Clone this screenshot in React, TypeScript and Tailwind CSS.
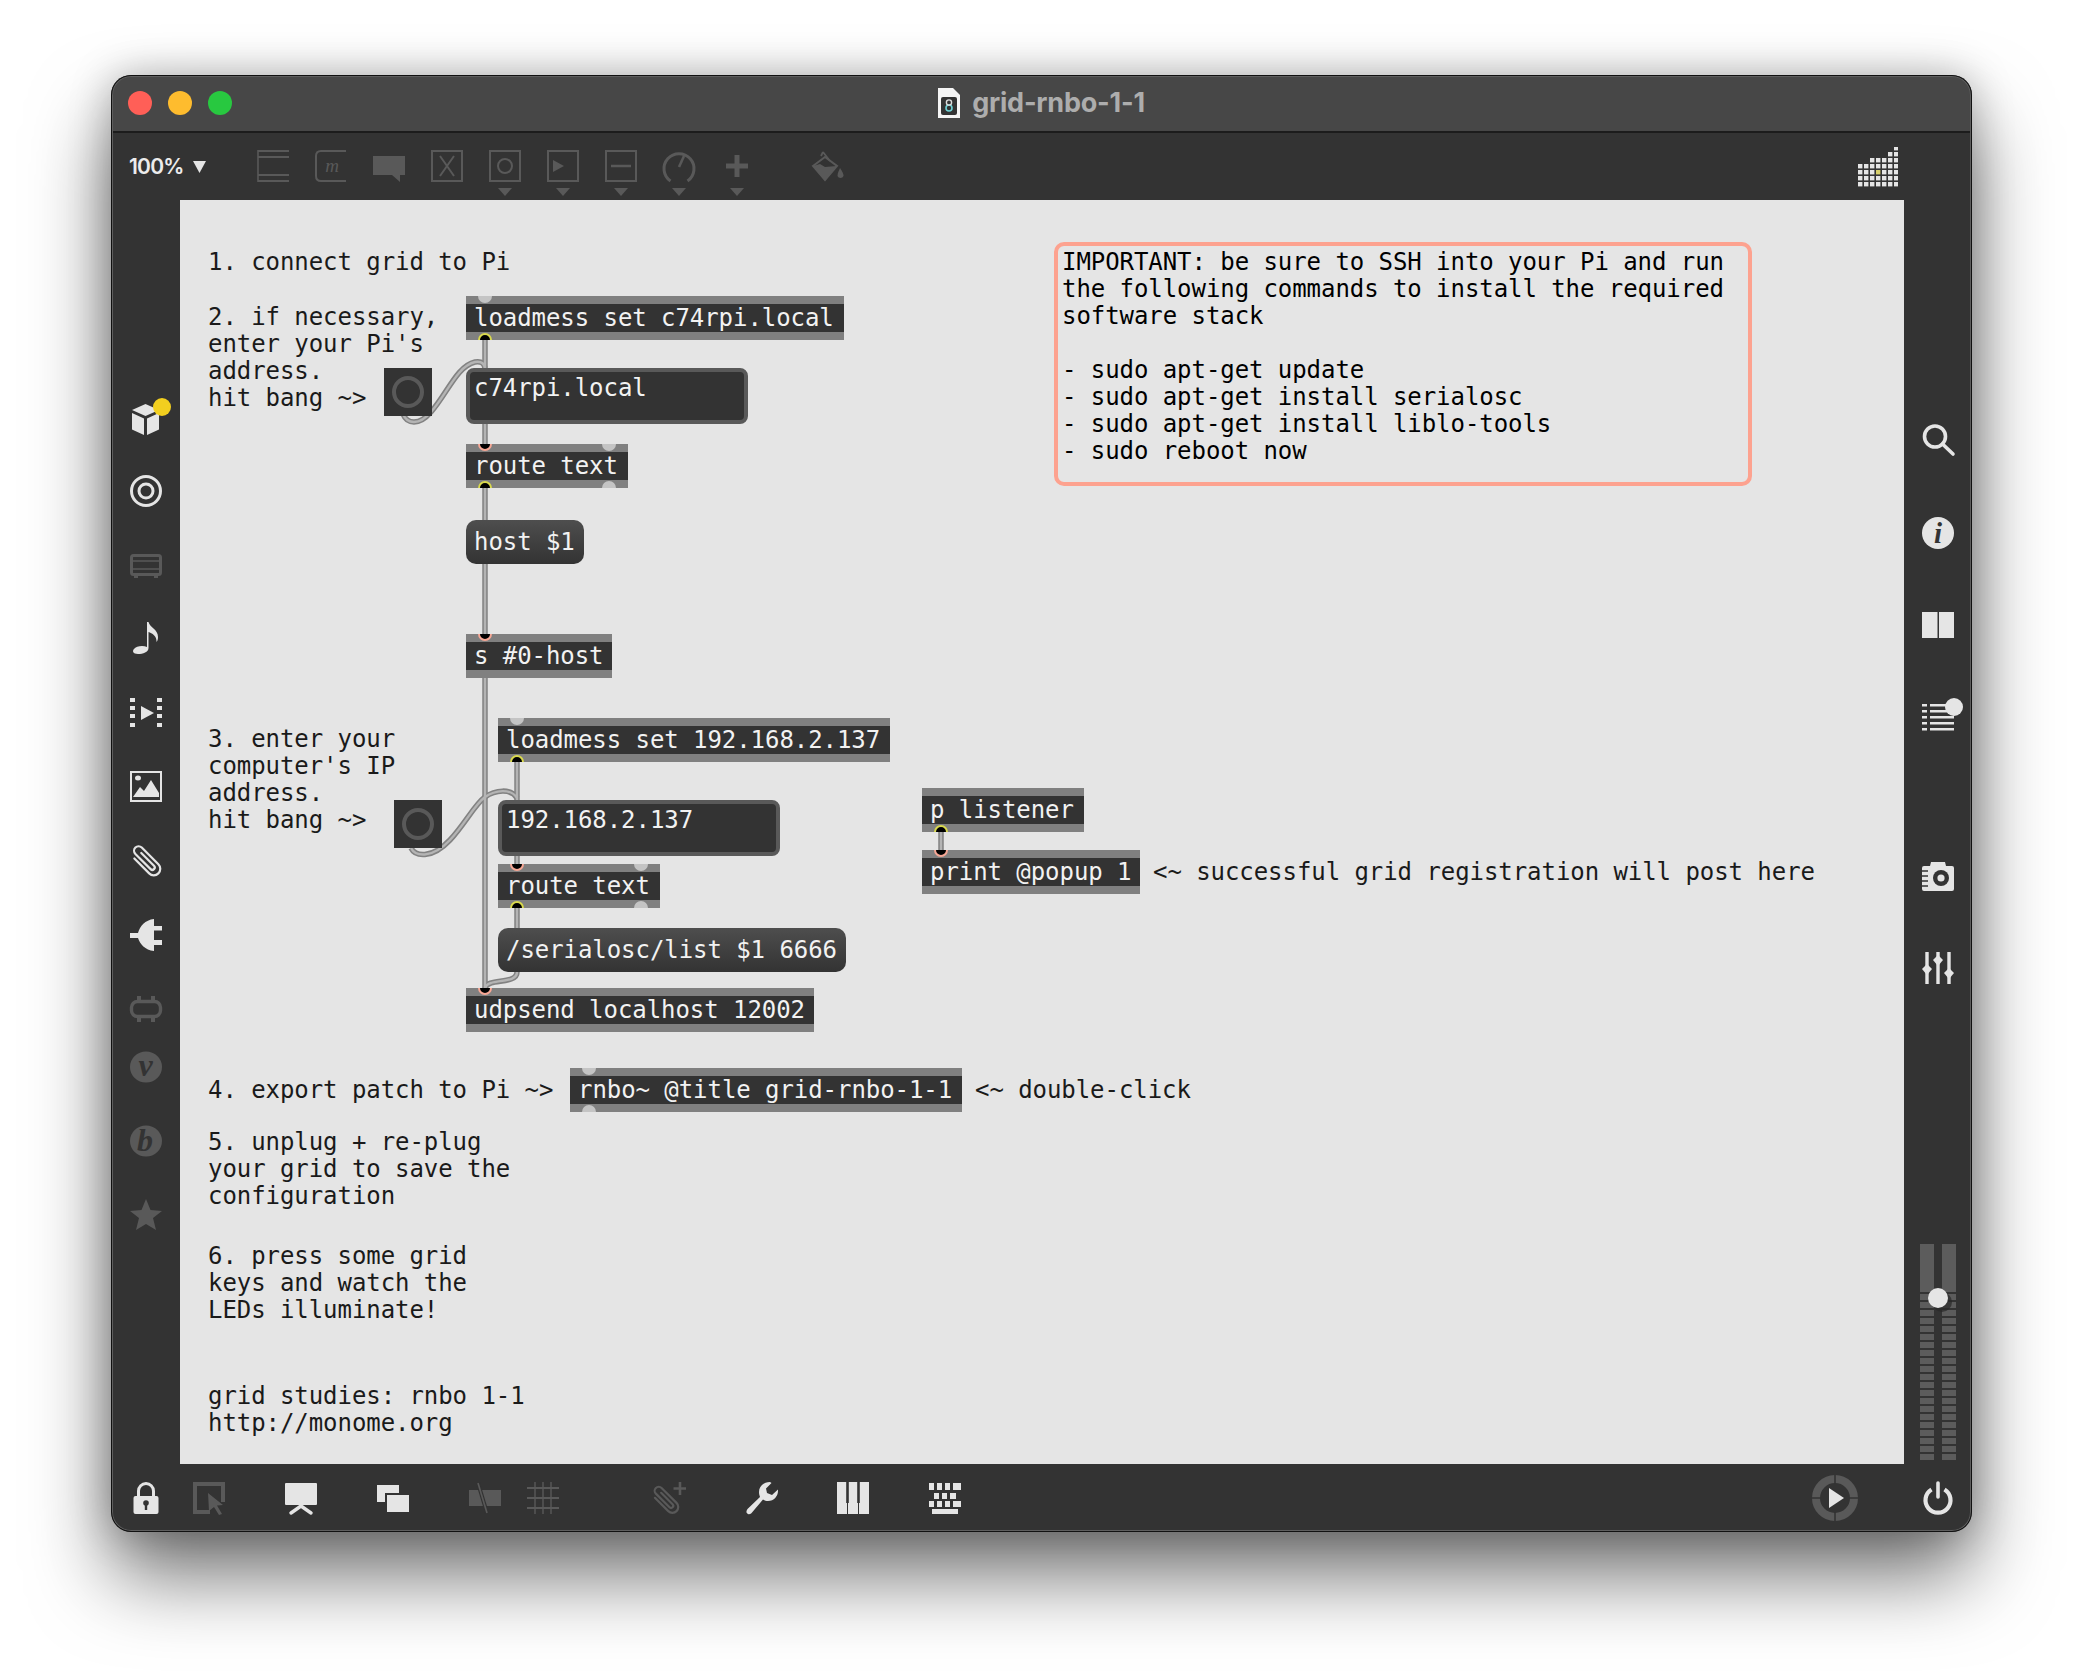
import React from "react";

const L = "#e5e5e5";
const D = "#595959";
const B = "#333333";

const Svg = ({ children, size = 32, className = "" }: { children: React.ReactNode; size?: number; className?: string }) => (
  <svg width={size} height={size} viewBox={`0 0 ${size} ${size}`} className={`block shrink-0 overflow-visible ${className}`}>
    {children}
  </svg>
);

const Clip = ({ c, sw = 2.2 }: { c: string; sw?: number }) => (
  <path
    transform="rotate(-45 16 16)"
    d="M9.5 6 V27 a6.5 6.5 0 0 0 13 0 V3.5 a4.5 4.5 0 0 0 -9 0 V25 a2.4 2.4 0 0 0 4.8 0 V7"
    fill="none"
    stroke={c}
    strokeWidth={sw}
    strokeLinecap="round"
  />
);

const Caret = () => (
  <svg width="14" height="8" viewBox="0 0 14 8" className="mt-[6px] block">
    <polygon points="0,0 14,0 7,8" fill={D} />
  </svg>
);

const BoxIcon = ({ children }: { children: React.ReactNode }) => (
  <Svg>
    <rect x="1" y="1" width="30" height="30" fill="none" stroke={D} strokeWidth="2" />
    {children}
  </Svg>
);

const Toolbar = () => (
  <div className="flex h-[67px] items-start pl-[18px] pt-[17px]">
    <div className="flex h-[32px] w-[128px] items-center gap-[10px] pt-[2px] font-['Inter',sans-serif] text-[21px] font-semibold tracking-[-0.8px] text-[#ececec]">
      <span>100%</span>
      <svg width="13" height="12" viewBox="0 0 13 12" className="block"><polygon points="0,0 13,0 6.5,12" fill={L} /></svg>
    </div>
    <div className="flex gap-[26px]">
      <Svg>
        <path d="M1 0V32" stroke={D} strokeWidth="1.6" />
        <path d="M1 1H32M1 7H32M1 25H32M1 31H32" stroke={D} strokeWidth="2.2" fill="none" />
      </Svg>
      <Svg>
        <path d="M31 1H6Q1 1 1 6V26Q1 31 6 31H31" fill="none" stroke={D} strokeWidth="2" />
        <text x="17" y="22" textAnchor="middle" fill={D} fontFamily="'Liberation Serif',serif" fontStyle="italic" fontSize="19">m</text>
      </Svg>
      <Svg><polygon points="0,6 32,6 32,25 27,25 27,32 19,25 0,25" fill={D} /></Svg>
      <BoxIcon><path d="M9 6L23 26M23 6L9 26" stroke={D} strokeWidth="2" /></BoxIcon>
      <div className="flex flex-col items-center">
        <BoxIcon><circle cx="16" cy="16" r="7" fill="none" stroke={D} strokeWidth="2" /></BoxIcon>
        <Caret />
      </div>
      <div className="flex flex-col items-center">
        <BoxIcon><polygon points="6,10 17,16 6,22" fill={D} /></BoxIcon>
        <Caret />
      </div>
      <div className="flex flex-col items-center">
        <BoxIcon><path d="M6 16H26" stroke={D} strokeWidth="2.4" /></BoxIcon>
        <Caret />
      </div>
      <div className="flex flex-col items-center">
        <Svg>
          <path d="M7.5 31A15 15 0 1 1 24.5 31" fill="none" stroke={D} strokeWidth="3" />
          <path d="M16 17L21 6" stroke={D} strokeWidth="2.6" />
        </Svg>
        <Caret />
      </div>
      <div className="flex flex-col items-center">
        <Svg><path d="M16 5V27M5 16H27" stroke={D} strokeWidth="5" /></Svg>
        <Caret />
      </div>
    </div>
    <div className="ml-[59px]">
      <Svg>
        <path d="M11 2L18 11M11 2L9 6" stroke={D} strokeWidth="1.8" fill="none" />
        <polygon points="1,16 13,7 25,16 13,30" fill="none" stroke={D} strokeWidth="2" />
        <polygon points="1,16 8,14 13,17 25,16 13,31" fill={D} />
        <path d="M28 18Q32 24 31.5 26A3.2 3.2 0 0 1 25.5 26Q25.5 23 28 18Z" fill={D} />
      </Svg>
    </div>
    <svg width="40" height="40" viewBox="0 0 40 40" className="-mt-[3px] ml-auto mr-[74px] block">
      {[4, 4, 5, 5, 5, 6, 7].map((h, i) =>
        Array.from({ length: h }).map((_, r) => (
          <rect key={`${i}-${r}`} x={i * 6} y={35 - r * 6} width="4.4" height="4.4" fill={i === 3 && r === 2 ? "#d7cf6a" : L} />
        ))
      )}
    </svg>
  </div>
);

const LeftBar = () => (
  <div className="flex w-[69px] shrink-0 flex-col items-center pl-[1px] pt-[203px]">
    <Svg>
      <polygon points="15.5,1 29,7 15.5,13 2,7" fill={L} />
      <polygon points="2,10 14,15.5 14,32 2,26.5" fill={L} />
      <polygon points="17,15.5 29,10 29,26.5 17,32" fill={L} />
      <circle cx="32" cy="4" r="9" fill="#f2cf1f" />
    </Svg>
    <div className="mt-[40px]">
      <Svg>
        <circle cx="16" cy="16" r="14.5" fill="none" stroke={L} strokeWidth="3" />
        <circle cx="16" cy="16" r="7" fill="none" stroke={L} strokeWidth="3" />
      </Svg>
    </div>
    <div className="mt-[42px]">
      <Svg>
        <rect x="1.5" y="6.5" width="29" height="19" rx="2" fill="none" stroke={D} strokeWidth="3" />
        <path d="M2 12H30M2 20H30" stroke={D} strokeWidth="1.5" />
        <path d="M6 26V29M26 26V29" stroke={D} strokeWidth="4" />
      </Svg>
    </div>
    <div className="mt-[41px]">
      <Svg>
        <path d="M17 0H18.5C20 6 28 7 28 15C28 17 27.5 19 26.5 20C27 14 22 11 18.5 10V26C18.5 30 13 32 8 32C3 32 2 29 4 27C6 24 13 23 17 25Z" fill={L} />
      </Svg>
    </div>
    <div className="mt-[43px]">
      <Svg>
        <path d="M0 1H5V5H0ZM0 9H5V13H0ZM0 17H5V21H0ZM0 26H5V30H0ZM27 1H32V5H27ZM27 9H32V13H27ZM27 17H32V21H27ZM27 26H32V30H27Z" fill={L} />
        <polygon points="11,9 24,16 11,23" fill={L} />
      </Svg>
    </div>
    <div className="mt-[42px]">
      <Svg>
        <rect x="1" y="1" width="30" height="29" fill="none" stroke={L} strokeWidth="2" />
        <ellipse cx="8" cy="7" rx="3" ry="2.5" fill={L} />
        <path d="M3 26L10 16L14 20L21 9L29 22V26Z" fill={L} />
      </Svg>
    </div>
    <div className="mt-[42px]">
      <Svg><Clip c={L} /></Svg>
    </div>
    <div className="mt-[42px]">
      <Svg>
        <path d="M0 14H8C10 7 15 1 24 0V32C15 31 10 25 8 19H0Z" fill={L} />
        <path d="M24 7H32V11.5H24ZM24 21H32V26H24Z" fill={L} />
      </Svg>
    </div>
    <div className="mt-[42px]">
      <Svg>
        <rect x="1.5" y="8.5" width="29" height="15" rx="6" fill="none" stroke={D} strokeWidth="3.4" />
        <path d="M9 3V29M23 3V29" stroke={D} strokeWidth="4" strokeDasharray="6 14" />
      </Svg>
    </div>
    <div className="mt-[26px]">
      <Svg>
        <ellipse cx="16" cy="16" rx="16" ry="15.5" fill={D} />
        <text x="15.5" y="25" textAnchor="middle" fill={B} fontFamily="'Liberation Serif',serif" fontStyle="italic" fontWeight="700" fontSize="32">v</text>
      </Svg>
    </div>
    <div className="mt-[42px]">
      <Svg>
        <ellipse cx="16" cy="16" rx="16" ry="15.5" fill={D} />
        <text x="15" y="26" textAnchor="middle" fill={B} fontFamily="'Liberation Serif',serif" fontStyle="italic" fontWeight="700" fontSize="32">b</text>
      </Svg>
    </div>
    <div className="mt-[42px]">
      <Svg><polygon points="16,0 20.5,11 32,12 23,19 26,31 16,25 6,31 9,19 0,12 11.5,11" fill={D} /></Svg>
    </div>
  </div>
);

const RightBar = () => (
  <div className="flex w-[68px] shrink-0 flex-col items-center pt-[225px]">
    <Svg>
      <circle cx="13" cy="11.5" r="10.5" fill="none" stroke={L} strokeWidth="3.6" />
      <path d="M20.5 19L31 29" stroke={L} strokeWidth="3.6" strokeLinecap="round" />
    </Svg>
    <div className="mt-[60px]">
      <Svg>
        <circle cx="16" cy="16" r="16" fill={L} />
        <text x="16" y="26" textAnchor="middle" fill={B} fontFamily="'Liberation Serif',serif" fontStyle="italic" fontWeight="700" fontSize="29">i</text>
      </Svg>
    </div>
    <div className="mt-[60px]">
      <Svg>
        <rect x="0" y="3" width="15.5" height="26" fill={L} />
        <rect x="17" y="3" width="15" height="26" fill={L} />
      </Svg>
    </div>
    <div className="mt-[59px]">
      <Svg>
        <path d="M0 4H5V6.4H0ZM8 4H26V6.4H8ZM0 10H5V12.4H0ZM8 10H26V12.4H8ZM0 16H5V18.4H0ZM8 16H32V18.4H8ZM0 22H5V24.4H0ZM8 22H32V24.4H8ZM0 28H5V30.4H0ZM8 28H32V30.4H8Z" fill={L} />
        <circle cx="32" cy="7" r="9" fill={L} />
      </Svg>
    </div>
    <div className="mt-[128px]">
      <Svg>
        <path d="M2 6H8L9 2H23L24 6H30Q32 6 32 8V29Q32 31 30 31H2Q0 31 0 29V8Q0 6 2 6Z" fill={L} />
        <path d="M0 11H6M0 16H6M0 21H6M0 26H6" stroke={B} strokeWidth="1.6" />
        <circle cx="19" cy="18" r="8" fill={B} />
        <circle cx="19" cy="18" r="3.6" fill={L} />
      </Svg>
    </div>
    <div className="mt-[60px]">
      <Svg>
        <path d="M5 0V32M16 0V32M27 0V32" stroke={L} strokeWidth="3.4" />
        <polygon points="0,17 5,12 10,17 5,23" fill={L} />
        <polygon points="11,8 16,3 21,8 16,14" fill={L} />
        <polygon points="22,21 27,16 32,21 27,27" fill={L} />
      </Svg>
    </div>
    <div className="relative mb-[4px] mt-auto flex gap-[8px]">
      {[0, 1].map((k) => (
        <div key={k} className="flex w-[14px] flex-col gap-[2px]">
          <div className="h-[48px] bg-[#5c5c5c]" />
          {Array.from({ length: 21 }).map((_, i) => (
            <div key={i} className="h-[6px] bg-[#5c5c5c]" />
          ))}
        </div>
      ))}
      <div className="absolute left-[8px] top-[44px] h-[20px] w-[20px] rounded-full bg-[#e5e5e5] shadow-[4px_4px_0_rgba(40,40,40,0.7)]" />
    </div>
  </div>
);

const BottomBar = () => (
  <div className="flex h-[68px] items-center pl-[19px] pr-[18px]">
    <Svg>
      <path d="M8.5 15V9A7.5 7.5 0 0 1 23.5 9V15" fill="none" stroke={L} strokeWidth="3" />
      <rect x="3.5" y="14" width="25" height="18" rx="2" fill={L} />
      <circle cx="16" cy="21" r="2.8" fill={B} />
      <rect x="14.8" y="22" width="2.4" height="6" fill={B} />
    </Svg>
    <div className="ml-[31px]">
      <Svg>
        <path d="M30 20V2H2V30H17" fill="none" stroke={D} strokeWidth="4" />
        <polygon points="15,11 30,23 24,23.5 29,32 26,33 21,25 16,29" fill={D} />
      </Svg>
    </div>
    <div className="ml-[60px]">
      <Svg>
        <rect x="0" y="1" width="32" height="22" rx="1" fill={L} />
        <path d="M16 24L6 31M16 24L26 31" stroke={L} strokeWidth="3.4" strokeLinecap="round" />
      </Svg>
    </div>
    <div className="ml-[60px]">
      <Svg>
        <path d="M0 3H22V11H8V20H0Z" fill={L} />
        <rect x="10" y="13" width="22" height="17" fill={L} />
      </Svg>
    </div>
    <div className="ml-[60px]">
      <Svg>
        <rect x="0" y="8" width="32" height="16" fill={D} />
        <path d="M9 1L18 31" stroke={B} strokeWidth="4" />
        <path d="M9 1L18 31" stroke={D} strokeWidth="1.6" />
      </Svg>
    </div>
    <div className="ml-[26px]">
      <Svg>
        <path d="M8 0V32M16 0V32M24 0V32" stroke={D} strokeWidth="1.4" />
        <path d="M0 6H32M0 16H32M0 26H32" stroke={D} strokeWidth="1.8" />
      </Svg>
    </div>
    <div className="ml-[95px]">
      <Svg>
        <g transform="translate(-3 3.6) scale(0.9)"><Clip c={D} sw={2.4} /></g>
        <path d="M26 0V13M19.5 6.5H32" stroke={D} strokeWidth="2.6" />
      </Svg>
    </div>
    <div className="ml-[60px]">
      <Svg>
        <path
          d="M24 0C18 0 13 4 13 10C13 12 13.5 13.5 14 15L1.5 27C0 29 0 31 2 32C3.5 32.5 5 32 6 30.5L17 17.5C19 18.5 20 19 22 19C28 19 32 14 32 9L32 7.5L26 13L21 11L20 6.5L25.5 1Z"
          fill={L}
        />
      </Svg>
    </div>
    <div className="ml-[59px]">
      <Svg>
        <rect x="0" y="0" width="32" height="32" fill={L} />
        <rect x="9.2" y="0" width="2.6" height="21" fill={B} />
        <rect x="20.2" y="0" width="2.6" height="21" fill={B} />
        <path d="M10.5 21V32M21.5 21V32" stroke={B} strokeWidth="1" />
      </Svg>
    </div>
    <div className="ml-[60px]">
      <Svg>
        <path
          d="M0 1H5V8H0ZM8 1H13V8H8ZM16 1H21V8H16ZM24 1H32V8H24ZM5 11H10V17H5ZM13 11H18V17H13ZM21 11H27V17H21ZM0 19H5V25H0ZM8 19H13V25H8ZM16 19H21V25H16ZM24 19H32V25H24ZM3 27H29V32H3Z"
          fill={L}
        />
      </Svg>
    </div>
    <div className="ml-auto mr-[64px]">
      <Svg size={46}>
        <circle cx="23" cy="23" r="19" fill="none" stroke={D} strokeWidth="8" />
        <path d="M23 0V9M23 37V46M0 23H9M37 23H46" stroke={B} strokeWidth="1.6" />
        <polygon points="17,13 32,23 17,33" fill={L} />
      </Svg>
    </div>
    <Svg>
      <path d="M9.5 7.5A12.5 12.5 0 1 0 22.5 7.5" fill="none" stroke={L} strokeWidth="4.2" />
      <path d="M16 1V15" stroke={L} strokeWidth="3.6" strokeLinecap="round" />
    </Svg>
  </div>
);

const Port = ({ at, kind }: { at: "tl" | "tr" | "bl" | "br"; kind: "in" | "out" | "off" }) => {
  const place = {
    tl: "-top-[7px] left-[12px]",
    tr: "-top-[7px] right-[12px]",
    bl: "-bottom-[7px] left-[12px]",
    br: "-bottom-[7px] right-[12px]",
  }[at];
  const look = {
    in: "bg-black border-2 border-[#f7a795]",
    out: "bg-black border-2 border-[#d9d94d]",
    off: "bg-[#c4c4c4]",
  }[kind];
  return <span className={`absolute block h-[14px] w-[14px] rounded-full ${place} ${look}`} />;
};

const Obj = ({ className, text, children }: { className: string; text: string; children?: React.ReactNode }) => (
  <div className={`absolute h-[44px] overflow-hidden bg-[#808080] py-[8px] ${className}`}>
    <div className="h-[28px] whitespace-pre bg-[#333333] pl-[8px] leading-[29px] text-[#f2f2f2]">{text}</div>
    {children}
  </div>
);

const Msg = ({ className, text }: { className: string; text: string }) => (
  <div className={`absolute flex h-[44px] items-center whitespace-pre rounded-[10px] bg-linear-to-b from-[#4e4e4e] to-[#333333] pl-[8px] text-[#f2f2f2] ${className}`}>{text}</div>
);

const TextBox = ({ className, text }: { className: string; text: string }) => (
  <div className={`absolute h-[56px] whitespace-pre rounded-[8px] border-[4px] border-[#595959] bg-[#333333] pl-[4px] pt-[3px] leading-[27px] text-[#f2f2f2] ${className}`}>{text}</div>
);

const Bang = ({ className }: { className: string }) => (
  <div className={`absolute flex h-[48px] w-[48px] items-center justify-center bg-[#333333] ${className}`}>
    <div className="h-[32px] w-[32px] rounded-full border-[4px] border-[#595959]" />
  </div>
);

const Note = ({ className, text }: { className: string; text: string }) => (
  <div className={`absolute whitespace-pre leading-[27px] text-[#1a1a1a] ${className}`}>{text}</div>
);

const cords = [
  "M306 140V168",
  "M224 214C228 224 240 226 252 212C268 194 278 166 296 162C302 161 305 163 306 168",
  "M306 224V244",
  "M306 288V320",
  "M306 364V434",
  "M306 478V790",
  "M338 562V600",
  "M232 648C236 656 252 660 271 640C286 624 296 604 306 597C316 590 332 588 338 598",
  "M338 656V664",
  "M338 708V728",
  "M338 772C338 782 320 780 312 783C308 784 306 786 306 790",
  "M762 632V650",
];

const Canvas = () => (
  <div className="min-w-0 flex-1 overflow-hidden bg-[#e5e5e5] font-['DejaVu_Sans_Mono',monospace] text-[24px] leading-[28px] tracking-[-0.06px]">
    <div className="relative -ml-[1px] h-full">
      <svg className="absolute left-0 top-0 block" width="1725" height="1264">
        {cords.map((d) => (
          <path key={d} d={d} fill="none" stroke="#828282" strokeWidth="5.5" />
        ))}
        {cords.map((d) => (
          <path key={d + "i"} d={d} fill="none" stroke="#b4b4b4" strokeWidth="2.4" />
        ))}
      </svg>

      <Note className="left-[29px] top-[49px]" text="1. connect grid to Pi" />
      <Note className="left-[29px] top-[104px]" text={"2. if necessary,\nenter your Pi's\naddress.\nhit bang ~>"} />
      <Note className="left-[29px] top-[526px]" text={"3. enter your\ncomputer's IP\naddress.\nhit bang ~>"} />
      <Note className="left-[29px] top-[877px]" text="4. export patch to Pi ~>" />
      <Note className="left-[796px] top-[877px]" text="<~ double-click" />
      <Note className="left-[29px] top-[929px]" text={"5. unplug + re-plug\nyour grid to save the\nconfiguration"} />
      <Note className="left-[29px] top-[1043px]" text={"6. press some grid\nkeys and watch the\nLEDs illuminate!"} />
      <Note className="left-[29px] top-[1183px]" text={"grid studies: rnbo 1-1\nhttp://monome.org"} />
      <Note className="left-[974px] top-[659px]" text="<~ successful grid registration will post here" />

      <div className="absolute left-[875px] top-[42px] h-[244px] w-[698px] whitespace-pre rounded-[10px] border-[4px] border-[#fda28f] pl-[4px] pt-[3px] leading-[27px] text-black">
        {"IMPORTANT: be sure to SSH into your Pi and run\nthe following commands to install the required\nsoftware stack\n\n- sudo apt-get update\n- sudo apt-get install serialosc\n- sudo apt-get install liblo-tools\n- sudo reboot now"}
      </div>

      <Bang className="left-[205px] top-[168px]" />
      <Bang className="left-[215px] top-[600px]" />

      <Obj className="left-[287px] top-[96px] w-[378px]" text="loadmess set c74rpi.local">
        <Port at="tl" kind="off" />
        <Port at="bl" kind="out" />
      </Obj>
      <TextBox className="left-[287px] top-[168px] w-[282px]" text="c74rpi.local" />
      <Obj className="left-[287px] top-[244px] w-[162px]" text="route text">
        <Port at="tl" kind="in" />
        <Port at="tr" kind="off" />
        <Port at="bl" kind="out" />
        <Port at="br" kind="off" />
      </Obj>
      <Msg className="left-[287px] top-[320px] w-[118px]" text="host $1" />
      <Obj className="left-[287px] top-[434px] w-[146px]" text="s #0-host">
        <Port at="tl" kind="in" />
      </Obj>

      <Obj className="left-[319px] top-[518px] w-[392px]" text="loadmess set 192.168.2.137">
        <Port at="tl" kind="off" />
        <Port at="bl" kind="out" />
      </Obj>
      <TextBox className="left-[319px] top-[600px] w-[282px]" text="192.168.2.137" />
      <Obj className="left-[319px] top-[664px] w-[162px]" text="route text">
        <Port at="tl" kind="in" />
        <Port at="tr" kind="off" />
        <Port at="bl" kind="out" />
        <Port at="br" kind="off" />
      </Obj>
      <Msg className="left-[319px] top-[728px] w-[348px]" text="/serialosc/list $1 6666" />
      <Obj className="left-[287px] top-[788px] w-[348px]" text="udpsend localhost 12002">
        <Port at="tl" kind="in" />
      </Obj>

      <Obj className="left-[391px] top-[868px] w-[392px]" text="rnbo~ @title grid-rnbo-1-1">
        <Port at="tl" kind="off" />
        <Port at="bl" kind="off" />
      </Obj>
      <Obj className="left-[743px] top-[588px] w-[162px]" text="p listener">
        <Port at="bl" kind="out" />
      </Obj>
      <Obj className="left-[743px] top-[650px] w-[218px]" text="print @popup 1">
        <Port at="tl" kind="in" />
      </Obj>
    </div>
  </div>
);

export default function App() {
  return (
    <div className="h-[1680px] w-[2084px] overflow-hidden bg-white pl-[111px] pt-[75px]">
      <div className="relative h-[1457px] w-[1861px] overflow-hidden rounded-[20px] bg-[#333333] shadow-[0_44px_80px_rgba(0,0,0,0.55),0_0_40px_rgba(0,0,0,0.25)]">
        <div className="grid h-[58px] grid-cols-[1fr_auto_1fr] items-center border-b-2 border-[#1c1c1c] bg-[#474747]">
          <div className="flex gap-[16px] pl-[17px]">
            <span className="block h-[24px] w-[24px] rounded-full bg-[#ff5f57]" />
            <span className="block h-[24px] w-[24px] rounded-full bg-[#febc2e]" />
            <span className="block h-[24px] w-[24px] rounded-full bg-[#28c840]" />
          </div>
          <div className="flex items-center gap-[12px] font-['Inter',sans-serif] text-[27px] font-bold tracking-[-0.2px] text-[#adadad]">
            <svg width="22" height="30" viewBox="0 0 22 30" className="block">
              <path d="M0 0H15L22 7V30H0Z" fill="#f5f5f5" />
              <rect x="3" y="9" width="16" height="18" rx="2" fill="#333333" />
              <circle cx="11" cy="20" r="3" fill="none" stroke="#6fd3d6" strokeWidth="1.6" />
              <circle cx="11" cy="14.5" r="2.6" fill="none" stroke="#dddddd" strokeWidth="1.4" />
            </svg>
            <span>grid-rnbo-1-1</span>
          </div>
          <div />
        </div>
        <Toolbar />
        <div className="flex h-[1264px]">
          <LeftBar />
          <Canvas />
          <RightBar />
        </div>
        <BottomBar />
        <div className="pointer-events-none absolute inset-0 rounded-[20px] border border-[#111111] shadow-[inset_0_0_0_1px_#5e5e5e]" />
      </div>
    </div>
  );
}
